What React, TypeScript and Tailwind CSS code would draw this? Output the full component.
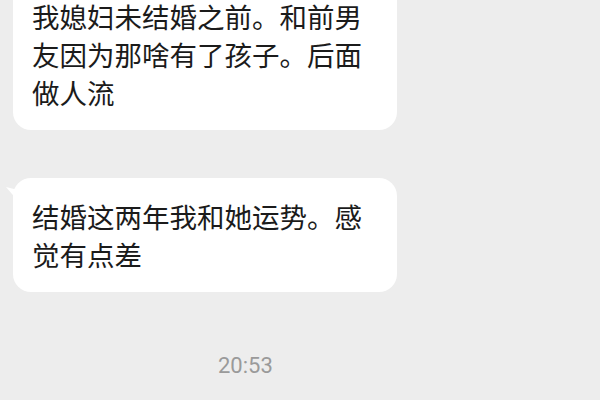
const font = { fontFamily: '"Noto Sans CJK SC", "Noto Sans", sans-serif' };

function Bubble({ children, tail }: { children: React.ReactNode; tail?: boolean }) {
  return (
    <div className="relative w-[384px] ml-[13px] rounded-[18px] bg-white px-[19px] py-[19px] text-[27.5px] leading-[38px] text-[#1b1b1b]">
      {tail && (
        <svg className="absolute left-[-7px] top-[9px]" width="12" height="14" viewBox="0 0 12 14">
          <path d="M0 0 L12 3 L12 14 Z" fill="#ffffff" />
        </svg>
      )}
      {children}
    </div>
  );
}

export default function App() {
  return (
    <div className="w-[600px] h-[400px] overflow-hidden bg-[#ededed] flex flex-col" style={font}>
      <div className="mt-[-22px]">
        <Bubble>我媳妇未结婚之前。和前男友因为那啥有了孩子。后面做人流</Bubble>
      </div>
      <div className="mt-[48px]">
        <Bubble tail>结婚这两年我和她运势。感觉有点差</Bubble>
      </div>
      <div className="mt-[57px] ml-[218px] text-[22px] text-[#9a9a9a]" style={{ fontFamily: 'Roboto, "Noto Sans", sans-serif' }}>
        20:53
      </div>
    </div>
  );
}
